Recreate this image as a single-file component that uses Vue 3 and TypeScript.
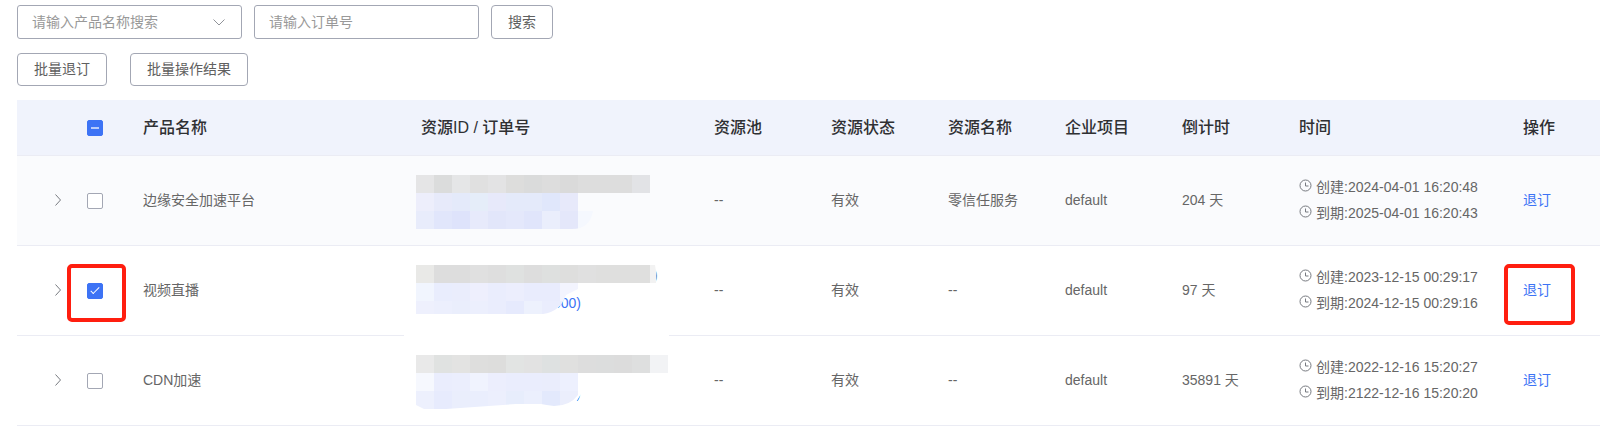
<script setup lang="ts">
import { computed, ref } from 'vue'

interface Fragment {
  text: string
  x: number
  y: number
  tone: string
  mask: string
}

interface Resource {
  id: number
  name: string
  pool: string
  status: string
  resourceName: string
  project: string
  countdown: string
  created: string
  expires: string
  selected: boolean
  marked: boolean
  tiles: string[][]
  outline: string
  tail: string
  fragments: Fragment[]
}

const product = ref('')
const orderNo = ref('')

const rows = ref<Resource[]>([
  {
    id: 1,
    name: '边缘安全加速平台',
    pool: '--',
    status: '有效',
    resourceName: '零信任服务',
    project: 'default',
    countdown: '204 天',
    created: '2024-04-01 16:20:48',
    expires: '2025-04-01 16:20:43',
    selected: false,
    marked: false,
    tiles: [
      ['#e5e5e6', '#dbdcdc', '#e5e6e7', '#e0e0e0', '#e3e3e4', '#dddddc', '#dadbdb', '#dddddd', '#dadada', '#dddddd', '#dddddd', '#dddddd', '#e2e3e6'],
      ['#edeefb', '#e7eafa', '#e4eafa', '#e5edf9', '#e7e9fa', '#e4eafa', '#e4eafa', '#e0e7fb', '#e7e9fa'],
      ['#e8ecfb', '#e1e6fb', '#dee3fb', '#e7eafb', '#e2e6fa', '#e4e8fb', '#e0e5fb', '#eaeefc', '#e4e7fa', '#f5f8fe'],
    ],
    outline: 'M0 0H234V18H177V36Q174 54 156 54H0Z',
    tail: '',
    fragments: [],
  },
  {
    id: 2,
    name: '视频直播',
    pool: '--',
    status: '有效',
    resourceName: '--',
    project: 'default',
    countdown: '97 天',
    created: '2023-12-15 00:29:17',
    expires: '2024-12-15 00:29:16',
    selected: true,
    marked: true,
    tiles: [
      ['#e9e9e7', '#dddddd', '#dddddd', '#e0e0e0', '#dedede', '#dfe1e0', '#dddddd', '#dee0df', '#dededd', '#e0e0e0', '#dfdfde', '#dfdfde', '#dfdfde', '#f2f2f2'],
      ['#f1f5fe', '#e9edfd', '#eaedfc', '#eeeffd', '#eaedfd', '#eceefd', '#e9ecfd', '#e9ecfd', '#f3f4fe'],
      ['#eef0fd', '#eceffd', '#eaeefc', '#eceffd', '#eaedfd', '#e6eafd', '#edf1fd', '#eaedfd', '#eaedfd'],
    ],
    outline: 'M0 0H239Q241 9 240 18H162V24L150 30Q144 47 127 49H0Z',
    tail: 'M-12 68H253V72H-12Z',
    fragments: [
      { text: '000)', x: 137, y: 43, tone: 'link', mask: 'M135 26H148Q150 34 141 44V50H135Z' },
      { text: ')', x: 237, y: 15, tone: 'dark', mask: 'M234 0H240Q241 9 239 18H234Z' },
    ],
  },
  {
    id: 3,
    name: 'CDN加速',
    pool: '--',
    status: '有效',
    resourceName: '--',
    project: 'default',
    countdown: '35891 天',
    created: '2022-12-16 15:20:27',
    expires: '2122-12-16 15:20:20',
    selected: false,
    marked: false,
    tiles: [
      ['#e9e9e9', '#e0e2e1', '#e3e3e2', '#dededd', '#dddddc', '#e2e4e3', '#e2e2e2', '#dee1e1', '#e0e0df', '#dddddd', '#dcdddd', '#dcdcdc', '#dedfdf', '#f2f3f5'],
      ['#f6f8fe', '#eaedfd', '#ebeefd', '#f0f3fe', '#eceefd', '#eaedfd', '#eaedfd', '#eaedfc', '#edf0fe'],
      ['#edf0fd', '#e7ebfd', '#eaeefc', '#eaeefd', '#eceffd', '#e7edfc', '#ebeffd', '#e3e9fc', '#ebeefc'],
    ],
    outline: 'M0 0H252V18H162V40Q154 51 138 51Q130 50 125 49H100L30 54H8L0 50Z',
    tail: '',
    fragments: [
      { text: ')', x: 160, y: 43, tone: 'link', mask: 'M158 28H167V36L160 47H158Z' },
    ],
  },
])

const allSelected = computed(() => rows.value.every((row) => row.selected))
const partlySelected = computed(() => !allSelected.value && rows.value.some((row) => row.selected))

function toggleAll(event: Event) {
  const checked = (event.target as HTMLInputElement).checked
  rows.value.forEach((row) => {
    row.selected = checked
  })
}
</script>

<template>
  <main class="page">
    <form class="bar search" @submit.prevent>
      <span class="picker">
        <select v-model="product" class="field" aria-label="产品名称">
          <option value="">请输入产品名称搜索</option>
          <option v-for="row in rows" :key="row.id" :value="row.name">{{ row.name }}</option>
        </select>
        <svg class="arrow" viewBox="0 0 12 12" aria-hidden="true"><path d="M0.5 3.5L6 9L11.5 3.5" /></svg>
      </span>
      <input v-model="orderNo" class="field" type="text" placeholder="请输入订单号" aria-label="订单号" />
      <button class="btn tall" type="submit">搜索</button>
    </form>

    <div class="bar actions">
      <button class="btn" type="button">批量退订</button>
      <button class="btn" type="button">批量操作结果</button>
    </div>

    <table class="grid">
      <colgroup>
        <col class="c-expand" />
        <col class="c-check" />
        <col class="c-name" />
        <col class="c-id" />
        <col span="5" />
        <col class="c-time" />
        <col class="c-op" />
      </colgroup>
      <thead>
        <tr>
          <th></th>
          <th class="tick">
            <span class="anchor">
              <input type="checkbox" aria-label="全选" :checked="allSelected" :indeterminate="partlySelected" @change="toggleAll" />
            </span>
          </th>
          <th>产品名称</th>
          <th>资源ID / 订单号</th>
          <th>资源池</th>
          <th>资源状态</th>
          <th>资源名称</th>
          <th>企业项目</th>
          <th>倒计时</th>
          <th>时间</th>
          <th>操作</th>
        </tr>
      </thead>
      <tbody>
        <tr v-for="(row, index) in rows" :key="row.id" :class="{ active: index === 0 }">
          <td class="expand">
            <button type="button" aria-label="展开">
              <svg viewBox="0 0 12 12" aria-hidden="true"><path d="M3.5 0.5L8.5 6L3.5 11.5" /></svg>
            </button>
          </td>
          <td class="tick">
            <span class="anchor">
              <input v-model="row.selected" type="checkbox" :aria-label="row.name" />
              <span v-if="row.marked" class="marker"></span>
            </span>
          </td>
          <td>{{ row.name }}</td>
          <td class="masked">
            <svg class="mosaic" width="252" height="54" viewBox="0 0 252 54" aria-hidden="true">
              <defs>
                <clipPath :id="`outline-${row.id}`"><path :d="row.outline" /></clipPath>
              </defs>
              <path v-if="row.tail" class="cover" :d="row.tail" />
              <template v-for="(part, n) in row.fragments" :key="n">
                <text :x="part.x" :y="part.y" :class="part.tone">{{ part.text }}</text>
                <path class="cover" :d="part.mask" />
              </template>
              <g :clip-path="`url(#outline-${row.id})`" shape-rendering="crispEdges">
                <template v-for="(line, r) in row.tiles" :key="r">
                  <rect v-for="(fill, c) in line" :key="c" :x="c * 18" :y="r * 18" width="18" height="18" :fill="fill" />
                </template>
              </g>
            </svg>
          </td>
          <td>{{ row.pool }}</td>
          <td>{{ row.status }}</td>
          <td>{{ row.resourceName }}</td>
          <td>{{ row.project }}</td>
          <td>{{ row.countdown }}</td>
          <td>
            <div v-for="line in [`创建:${row.created}`, `到期:${row.expires}`]" :key="line" class="time">
              <svg viewBox="0 0 13 13" aria-hidden="true">
                <circle cx="6.5" cy="6.5" r="5.5" />
                <path d="M6.5 3.5V7H9.5" />
              </svg>
              <span>{{ line }}</span>
            </div>
          </td>
          <td>
            <span class="anchor">
              <a href="#">退订</a>
              <span v-if="row.marked" class="marker wide"></span>
            </span>
          </td>
        </tr>
      </tbody>
    </table>
  </main>
</template>

<style>
body {
  margin: 0;
  background: #fff;
}
</style>

<style scoped>
.page {
  padding: 5px 20px 12px 17px;
  color: #666;
  font: 14px/20px "Liberation Sans", Arial, "Noto Sans CJK SC", sans-serif;
}

.bar {
  display: flex;
}

.search {
  gap: 12px;
}

.actions {
  gap: 23px;
  margin: 14px 0;
}

.picker {
  position: relative;
  display: flex;
}

.field {
  box-sizing: border-box;
  width: 225px;
  height: 34px;
  padding: 0 14px;
  border: 1px solid #a3a7b4;
  border-radius: 3px;
  background: #fff;
  color: #999;
  font: inherit;
  appearance: none;
  outline: none;
}

.field::placeholder {
  color: #999;
  opacity: 1;
}

.arrow {
  position: absolute;
  top: 11px;
  right: 17px;
  width: 12px;
  height: 12px;
  fill: none;
  stroke: #909399;
  pointer-events: none;
}

.btn {
  box-sizing: border-box;
  height: 33px;
  padding: 0 16px 2px;
  border: 1px solid #a3a7b4;
  border-radius: 4px;
  background: #fff;
  color: #606060;
  font: inherit;
  cursor: pointer;
}

.tall {
  height: 34px;
  padding-bottom: 0;
}

.grid {
  width: 100%;
  border-collapse: separate;
  border-spacing: 0;
  table-layout: fixed;
}

.c-expand {
  width: 60px;
}

.c-check {
  width: 56px;
}

.c-name {
  width: 278px;
}

.c-id {
  width: 293px;
}

.c-time {
  width: 224px;
}

.c-op {
  width: 87px;
}

th,
td {
  box-sizing: border-box;
  padding: 0 10px 2px;
  border-bottom: 1px solid #ebecf4;
  text-align: left;
  vertical-align: middle;
}

th {
  height: 56px;
  padding-bottom: 0;
  background: #f0f3fc;
  color: #2f3033;
  font-size: 16px;
  font-weight: 500;
}

td {
  height: 90px;
}

.active td {
  background: #fafbfd;
}

.expand {
  padding: 0 12px 2px 35px;
}

.expand button {
  display: block;
  width: 12px;
  height: 12px;
  padding: 0;
  border: 0;
  background: none;
}

.expand svg {
  display: block;
  width: 12px;
  height: 12px;
  fill: none;
  stroke: #777a80;
}

.anchor {
  position: relative;
  display: inline-block;
  vertical-align: middle;
}

input[type="checkbox"] {
  display: grid;
  place-items: center;
  box-sizing: border-box;
  width: 16px;
  height: 16px;
  margin: 0;
  border: 1px solid #a3a7b4;
  border-radius: 2px;
  background: #fff;
  appearance: none;
}

input[type="checkbox"]:checked,
input[type="checkbox"]:indeterminate {
  border-color: #3d73f5;
  background: #3d73f5;
}

input[type="checkbox"]:indeterminate::after {
  width: 8px;
  height: 2px;
  background: #b9cbfb;
  content: "";
}

input[type="checkbox"]:checked::after {
  width: 3px;
  height: 8px;
  margin-bottom: 3px;
  border: solid #fff;
  border-width: 0 1px 1px 0;
  transform: rotate(45deg);
  content: "";
}

.marker {
  position: absolute;
  inset: -19px -23px -23px -20px;
  border: 4px solid #ff1e0f;
  border-radius: 5px;
  pointer-events: none;
}

.wide {
  inset: -16px -24px -25px -19px;
}

.masked {
  padding: 2px 5px 0;
}

.mosaic {
  display: block;
  overflow: visible;
}

.cover {
  fill: #fff;
}

.link {
  fill: #3d73f5;
}

.dark {
  fill: #4a5f9a;
}

.time {
  display: flex;
  align-items: center;
  gap: 4px;
  line-height: 26px;
  white-space: nowrap;
}

.time svg {
  width: 13px;
  height: 13px;
  margin-bottom: 2px;
  fill: none;
  stroke: #777a80;
}

a {
  display: block;
  color: #3d73f5;
  text-decoration: none;
}
</style>
